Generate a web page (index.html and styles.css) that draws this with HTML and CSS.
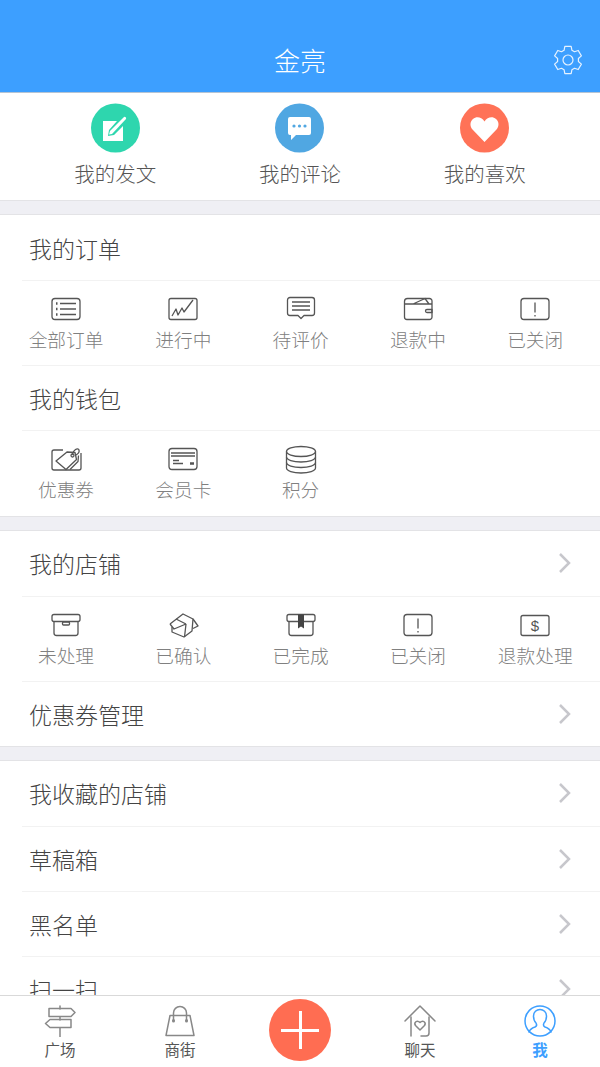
FILE: index.html
```html
<!DOCTYPE html>
<html lang="zh-CN">
<head>
    <meta charset="UTF-8">
    <meta name="viewport" content="width=device-width, initial-scale=1.0">
    <title>我</title>
    <link rel="stylesheet" href="styles.css">
</head>
<body>
    <div class="app">
        <header class="header">
            <span></span>
            <span class="header-title">金亮</span>
            <svg class="gear" width="30" height="30" viewBox="-15 -15 30 30">
                <polygon points="3.15,-13.64 3.93,-9.74 6.47,-8.27 10.24,-9.55 13.39,-4.09 10.4,-1.47 10.4,1.47 13.39,4.09 10.24,9.55 6.47,8.27 3.93,9.74 3.15,13.64 -3.15,13.64 -3.93,9.74 -6.47,8.27 -10.24,9.55 -13.39,4.09 -10.4,1.47 -10.4,-1.47 -13.39,-4.09 -10.24,-9.55 -6.47,-8.27 -3.93,-9.74 -3.15,-13.64"/>
                <circle r="5"/>
            </svg>
        </header>

        <main class="content">
            <div class="quick">
                <div class="quick-item">
                    <svg class="quick-icon" width="49" height="50" viewBox="0 0 49 50">
                        <circle cx="24.5" cy="25" r="24.5" fill="#2ed6ae"/>
                        <path d="M12 18h14l-8 9-1 6 6-1 9-9v15H12z" fill="#fff"/>
                        <path d="M19 28L33 14a1.5 1.5 0 0 1 2 2L21 31l-3 .5z" fill="#fff"/>
                    </svg>
                    <span>我的发文</span>
                </div>
                <div class="quick-item">
                    <svg class="quick-icon" width="49" height="50" viewBox="0 0 49 50">
                        <circle cx="24.5" cy="25" r="24.5" fill="#50a7e2"/>
                        <path d="M15 14h19a2 2 0 0 1 2 2v14a2 2 0 0 1-2 2H21l-5 5v-5h-1a2 2 0 0 1-2-2V16a2 2 0 0 1 2-2z" fill="#fff"/>
                        <circle cx="19" cy="23" r="1.6" fill="#50a7e2"/>
                        <circle cx="24.5" cy="23" r="1.6" fill="#50a7e2"/>
                        <circle cx="30" cy="23" r="1.6" fill="#50a7e2"/>
                    </svg>
                    <span>我的评论</span>
                </div>
                <div class="quick-item">
                    <svg class="quick-icon" width="49" height="50" viewBox="0 0 49 50">
                        <circle cx="24.5" cy="25" r="24.5" fill="#ff7257"/>
                        <path d="M24.5 39L12.5 26.5c-3-3.5-2.5-8 .5-10.5 3.500-2.800 8.500-2 11.500 2.500 3-4.500 8-5.300 11.500-2.500 3 2.500 3.500 7 .5 10.500z" fill="#fff"/>
                    </svg>
                    <span>我的喜欢</span>
                </div>
            </div>
            <div class="gap"></div>

            <section class="section">
                <div class="row">我的订单</div>
                <div class="icon-row">
                    <div class="icon-item">
                        <svg class="line-icon" width="34" height="26" viewBox="0 0 34 26">
                            <rect x="3" y="3.500" width="28" height="21" rx="3"/>
                            <path d="M11 8.500h16M11 14h16M11 19.500h16"/>
                            <path class="solid" d="M7 8.500h1.500M7 14h1.500M7 19.500h1.500"/>
                        </svg>
                        <span>全部订单</span>
                    </div>
                    <div class="icon-item">
                        <svg class="line-icon" width="34" height="26" viewBox="0 0 34 26">
                            <rect x="3" y="3.500" width="28" height="21" rx="2"/>
                            <path d="M6 21l4-7 2 6 4-7 2 4 9-12"/>
                        </svg>
                        <span>进行中</span>
                    </div>
                    <div class="icon-item">
                        <svg class="line-icon" width="34" height="26" viewBox="0 0 34 26">
                            <path d="M6 2.500h22a2.500 2.500 0 0 1 2.500 2.500v13a2.500 2.500 0 0 1-2.500 2.500h-8l-3 3-3-3H6A2.500 2.500 0 0 1 3.500 18V5A2.500 2.500 0 0 1 6 2.500z"/>
                            <path d="M8 7h18M8 11h18M8 15h18"/>
                        </svg>
                        <span>待评价</span>
                    </div>
                    <div class="icon-item">
                        <svg class="line-icon" width="34" height="26" viewBox="0 0 34 26">
                            <path d="M3.500 9V6.500a3 3 0 0 1 3-3h22a2.500 2.500 0 0 1 2.500 2.500v16a2.500 2.500 0 0 1-2.500 2.500H6a2.500 2.500 0 0 1-2.500-2.500V7"/>
                            <path d="M3.500 9h27.500M12 9l12-5.500 4 5.500"/>
                            <path d="M31 14.500h-5a1.500 1.500 0 0 0 0 3h5z"/>
                        </svg>
                        <span>退款中</span>
                    </div>
                    <div class="icon-item">
                        <svg class="line-icon" width="34" height="26" viewBox="0 0 34 26">
                            <rect x="3" y="3.500" width="28" height="21" rx="3"/>
                            <path d="M17 7.500v10M17 20v1.500"/>
                        </svg>
                        <span>已关闭</span>
                    </div>
                </div>
                <div class="row row-line">我的钱包</div>
                <div class="icon-row">
                    <div class="icon-item">
                        <svg class="line-icon" width="34" height="26" viewBox="0 0 34 26">
                            <path d="M14 5H5a2 2 0 0 0-2 2v16a2 2 0 0 0 2 2h25a2 2 0 0 0 2-2V8"/>
                            <path d="M7 16L18 7l8 .5 1.500 7L17 24.500z"/>
                            <path d="M21 24.500l8-8 .5-6"/>
                            <circle cx="23.500" cy="10.500" r="1.500"/>
                            <path d="M23 10c1-5 6-8 7-5 .5 2-1 4-3 5"/>
                        </svg>
                        <span>优惠券</span>
                    </div>
                    <div class="icon-item">
                        <svg class="line-icon" width="34" height="26" viewBox="0 0 34 26">
                            <rect x="3" y="3.500" width="28" height="21" rx="3"/>
                            <path d="M5 8h24M5 11h24M7 15.500h6M7 18.500h10"/>
                            <path class="solid" d="M24 18.500h4"/>
                        </svg>
                        <span>会员卡</span>
                    </div>
                    <div class="icon-item">
                        <svg class="line-icon" width="34" height="26" viewBox="0 0 34 26">
                            <ellipse cx="17" cy="6.500" rx="14.500" ry="5"/>
                            <path d="M2.500 6.500v16.500c0 2.800 6.500 5 14.500 5s14.500-2.200 14.500-5V6.500"/>
                            <path d="M2.500 12c0 2.800 6.500 5 14.500 5s14.500-2.200 14.500-5M2.500 17.500c0 2.800 6.500 5 14.500 5s14.500-2.200 14.500-5"/>
                        </svg>
                        <span>积分</span>
                    </div>
                </div>
            </section>
            <div class="gap"></div>

            <section class="section">
                <div class="row">我的店铺<svg class="chevron" width="14" height="22" viewBox="0 0 14 22"><path d="M2 2l9 9-9 9"/></svg></div>
                <div class="icon-row">
                    <div class="icon-item">
                        <svg class="line-icon" width="34" height="26" viewBox="0 0 34 26">
                            <rect x="3" y="3.500" width="28" height="7" rx="2"/>
                            <path d="M5 10.500V22a2.500 2.500 0 0 0 2.500 2.500h19A2.500 2.500 0 0 0 29 22V10.500"/>
                            <rect x="13.500" y="11" width="7" height="3" rx="1"/>
                        </svg>
                        <span>未处理</span>
                    </div>
                    <div class="icon-item">
                        <svg class="line-icon" width="34" height="26" viewBox="0 0 34 26">
                            <path d="M4 13L17 3l10 5-1 12-8 6-12-5v-5"/>
                            <path d="M4 13l4 5 12-5M27 8l5 7-5 2.500M20 13L10 8M20 13l-1.500 13"/>
                        </svg>
                        <span>已确认</span>
                    </div>
                    <div class="icon-item">
                        <svg class="line-icon" width="34" height="26" viewBox="0 0 34 26">
                            <rect x="3" y="3.500" width="28" height="7" rx="2"/>
                            <path d="M5 10.500V22a2.500 2.500 0 0 0 2.500 2.500h19A2.500 2.500 0 0 0 29 22V10.500"/>
                            <path class="fill" d="M14 3.500h6v14l-3-2-3 2z"/>
                        </svg>
                        <span>已完成</span>
                    </div>
                    <div class="icon-item">
                        <svg class="line-icon" width="34" height="26" viewBox="0 0 34 26">
                            <rect x="3" y="3.500" width="28" height="21" rx="3"/>
                            <path d="M17 7.500v10M17 20v1.500"/>
                        </svg>
                        <span>已关闭</span>
                    </div>
                    <div class="icon-item">
                        <svg class="line-icon" width="34" height="26" viewBox="0 0 34 26">
                            <rect x="3" y="4.500" width="28" height="20" rx="2"/>
                            <text class="dollar" x="17" y="20" text-anchor="middle">$</text>
                        </svg>
                        <span>退款处理</span>
                    </div>
                </div>
                <div class="row row-line">优惠券管理<svg class="chevron" width="14" height="22" viewBox="0 0 14 22"><path d="M2 2l9 9-9 9"/></svg></div>
            </section>
            <div class="gap"></div>

            <section class="section">
                <div class="row">我收藏的店铺<svg class="chevron" width="14" height="22" viewBox="0 0 14 22"><path d="M2 2l9 9-9 9"/></svg></div>
                <div class="row row-line">草稿箱<svg class="chevron" width="14" height="22" viewBox="0 0 14 22"><path d="M2 2l9 9-9 9"/></svg></div>
                <div class="row row-line">黑名单<svg class="chevron" width="14" height="22" viewBox="0 0 14 22"><path d="M2 2l9 9-9 9"/></svg></div>
                <div class="row row-line">扫一扫<svg class="chevron" width="14" height="22" viewBox="0 0 14 22"><path d="M2 2l9 9-9 9"/></svg></div>
            </section>
        </main>

        <nav class="tabbar">
            <div class="tab">
                <svg class="tab-icon" width="34" height="32" viewBox="0 0 34 32">
                    <path d="M17 1v3M17 12v3M17 23v9"/>
                    <path d="M6 3.500h22l4 4-4 4H6zM28 14.500H7l-4.500 4 4.500 4h21z"/>
                </svg>
                <span>广场</span>
            </div>
            <div class="tab">
                <svg class="tab-icon" width="34" height="32" viewBox="0 0 34 32">
                    <path d="M7 10.500h20l4 20H3z"/>
                    <path d="M10.500 15V8a6.500 6.500 0 0 1 13 0v7"/>
                    <path class="dot" d="M10.500 15.500v.5M23.500 15.500v.5"/>
                </svg>
                <span>商街</span>
            </div>
            <div class="tab tab-plus">
                <div class="plus"><span class="plus-h"></span><span class="plus-v"></span></div>
            </div>
            <div class="tab">
                <svg class="tab-icon" width="34" height="32" viewBox="0 0 34 32">
                    <path d="M2 16L17 1l15 15"/>
                    <path d="M8 12v19M26 12v16a3 3 0 0 1-3 3h-5"/>
                    <path d="M17 25l-4.500-4.500c-2-3 1.500-6 4.500-3 3-3 6.500 0 4.500 3z"/>
                </svg>
                <span>聊天</span>
            </div>
            <div class="tab tab-active">
                <svg class="tab-icon" width="34" height="32" viewBox="0 0 34 32">
                    <circle cx="17" cy="16" r="15"/>
                    <path d="M6 27c1-3 3-4 6-5 2-1 2-2 1-4-1.500-1.500-2.500-4-2.500-7 0-4 3-6.500 6.500-6.500s6.500 2.500 6.500 6.500c0 3-1 5.500-2.500 7-1 2-1 3 1 4 3 1 5 2 6 5"/>
                </svg>
                <span>我</span>
            </div>
        </nav>
    </div>
</body>
</html>
```

FILE: styles.css
```css
* {
    box-sizing: border-box;
}
body {
    margin: 0;
    background: #fff;
    font-family: "Noto Sans CJK SC", "Noto Sans", sans-serif;
    font-weight: 300;
}
.app {
    display: flex;
    flex-direction: column;
    height: 100vh;
    overflow: hidden;
}
.header {
    display: grid;
    grid-template-columns: 1fr auto 1fr;
    align-items: center;
    flex: none;
    height: 93px;
    padding: 28px 17px 0;
    background: #3d9fff;
    border-bottom: 1px solid #b5c4d4;
}
.header-title {
    margin-bottom: 2px;
    color: #fff;
    font-size: 26px;
}
.gear {
    justify-self: end;
    fill: none;
    stroke: #e6f2ff;
    stroke-width: 1.2;
    stroke-linejoin: round;
}
.content {
    flex: 1;
    min-height: 0;
    overflow: hidden;
}
.quick {
    display: grid;
    grid-template-columns: repeat(3, 1fr);
    height: 107px;
    padding: 10px 23px 0;
}
.quick-item {
    display: flex;
    flex-direction: column;
    align-items: center;
    color: #555;
    font-size: 20.5px;
    line-height: 30px;
}
.quick-icon {
    margin-bottom: 5px;
}
.gap {
    height: 15px;
    background: #efeff4;
    border-top: 1px solid #e3e3e6;
    border-bottom: 1px solid #e3e3e6;
}
.section {
    background: #fff;
}
.row {
    display: flex;
    align-items: center;
    justify-content: space-between;
    height: 65px;
    padding: 0 28px 0 29px;
    color: #444;
    font-size: 23px;
}
.row-line {
    margin-left: 22px;
    padding-left: 7px;
    border-top: 1px solid #f2f2f2;
}
.chevron {
    fill: none;
    stroke: #c7c7cc;
    stroke-width: 2.5;
}
.icon-row {
    position: relative;
    display: grid;
    grid-template-columns: repeat(5, 117.300px);
    align-content: start;
    height: 85.250px;
    padding: 15px 0 0 7.400px;
}
.icon-row::before {
    content: "";
    position: absolute;
    top: 0;
    left: 22px;
    right: 0;
    height: 1px;
    background: #f2f2f2;
}
.icon-item {
    display: flex;
    flex-direction: column;
    align-items: center;
    color: #808080;
    font-size: 18.700px;
    line-height: 24px;
}
.icon-item svg {
    margin-bottom: 6px;
    overflow: visible;
}
.line-icon {
    fill: none;
    stroke: #555;
    stroke-width: 1.300;
    stroke-linejoin: round;
}
.line-icon .solid {
    stroke-width: 2.500;
}
.line-icon .fill {
    fill: #444;
    stroke: none;
}
.dollar {
    fill: #555;
    stroke: none;
    font-family: "Liberation Sans", sans-serif;
    font-size: 15px;
    font-weight: 400;
}
.tabbar {
    display: grid;
    grid-template-columns: repeat(5, 120px);
    flex: none;
    height: 72px;
    background: #fff;
    border-top: 1px solid #d9d9d9;
}
.tab {
    display: flex;
    flex-direction: column;
    align-items: center;
    padding-top: 9px;
    color: #555;
    font-size: 15.500px;
    font-weight: 400;
    line-height: 20px;
}
.tab-icon {
    margin-bottom: 2px;
    fill: none;
    stroke: #888;
    stroke-width: 1.500;
    stroke-linejoin: round;
    stroke-linecap: round;
}
.tab-icon .dot {
    stroke-width: 3;
}
.tab-plus {
    padding-top: 3px;
}
.plus {
    position: relative;
    width: 62px;
    height: 62px;
    border-radius: 50%;
    background: #ff6d52;
}
.plus-h,
.plus-v {
    position: absolute;
    background: #fff;
}
.plus-h {
    left: 12px;
    top: 29.500px;
    width: 38px;
    height: 3px;
}
.plus-v {
    left: 29.500px;
    top: 12px;
    width: 3px;
    height: 38px;
}
.tab-active {
    color: #3d9fff;
    font-weight: 700;
}
.tab-active .tab-icon {
    stroke: #3d9fff;
}
```
